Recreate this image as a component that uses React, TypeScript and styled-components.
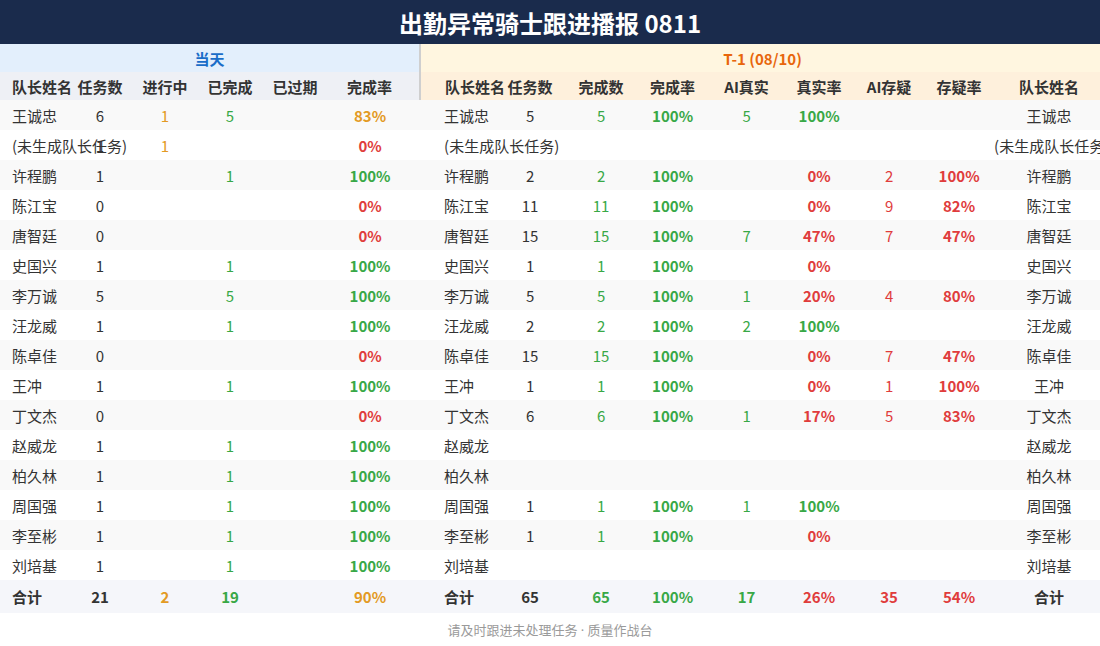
import * as React from 'react';
import styled, { createGlobalStyle } from 'styled-components';

type Tone = 'dark' | 'orange' | 'green' | 'red';

interface TodayRow {
  name: string;
  tasks?: number;
  doing?: number;
  done?: number;
  expired?: number;
  rate: number;
}

interface PrevRow {
  name: string;
  tasks?: number;
  done?: number;
  rate?: number;
  aiTrue?: number;
  trueRate?: number;
  aiDoubt?: number;
  doubtRate?: number;
}

const today: TodayRow[] = [
  { name: '王诚忠', tasks: 6, doing: 1, done: 5, rate: 83 },
  { name: '(未生成队长任务)', tasks: 1, doing: 1, rate: 0 },
  { name: '许程鹏', tasks: 1, done: 1, rate: 100 },
  { name: '陈江宝', tasks: 0, rate: 0 },
  { name: '唐智廷', tasks: 0, rate: 0 },
  { name: '史国兴', tasks: 1, done: 1, rate: 100 },
  { name: '李万诚', tasks: 5, done: 5, rate: 100 },
  { name: '汪龙威', tasks: 1, done: 1, rate: 100 },
  { name: '陈卓佳', tasks: 0, rate: 0 },
  { name: '王冲', tasks: 1, done: 1, rate: 100 },
  { name: '丁文杰', tasks: 0, rate: 0 },
  { name: '赵威龙', tasks: 1, done: 1, rate: 100 },
  { name: '柏久林', tasks: 1, done: 1, rate: 100 },
  { name: '周国强', tasks: 1, done: 1, rate: 100 },
  { name: '李至彬', tasks: 1, done: 1, rate: 100 },
  { name: '刘培基', tasks: 1, done: 1, rate: 100 },
];

const prev: PrevRow[] = [
  { name: '王诚忠', tasks: 5, done: 5, rate: 100, aiTrue: 5, trueRate: 100 },
  { name: '(未生成队长任务)' },
  { name: '许程鹏', tasks: 2, done: 2, rate: 100, trueRate: 0, aiDoubt: 2, doubtRate: 100 },
  { name: '陈江宝', tasks: 11, done: 11, rate: 100, trueRate: 0, aiDoubt: 9, doubtRate: 82 },
  { name: '唐智廷', tasks: 15, done: 15, rate: 100, aiTrue: 7, trueRate: 47, aiDoubt: 7, doubtRate: 47 },
  { name: '史国兴', tasks: 1, done: 1, rate: 100, trueRate: 0 },
  { name: '李万诚', tasks: 5, done: 5, rate: 100, aiTrue: 1, trueRate: 20, aiDoubt: 4, doubtRate: 80 },
  { name: '汪龙威', tasks: 2, done: 2, rate: 100, aiTrue: 2, trueRate: 100 },
  { name: '陈卓佳', tasks: 15, done: 15, rate: 100, trueRate: 0, aiDoubt: 7, doubtRate: 47 },
  { name: '王冲', tasks: 1, done: 1, rate: 100, trueRate: 0, aiDoubt: 1, doubtRate: 100 },
  { name: '丁文杰', tasks: 6, done: 6, rate: 100, aiTrue: 1, trueRate: 17, aiDoubt: 5, doubtRate: 83 },
  { name: '赵威龙' },
  { name: '柏久林' },
  { name: '周国强', tasks: 1, done: 1, rate: 100, aiTrue: 1, trueRate: 100 },
  { name: '李至彬', tasks: 1, done: 1, rate: 100, trueRate: 0 },
  { name: '刘培基' },
];

const completionTone = (rate: number): Tone => {
  if (rate >= 100) return 'green';
  if (rate >= 60) return 'orange';
  return 'red';
};

const trueTone = (rate: number): Tone => (rate >= 100 ? 'green' : 'red');

const colors: Record<Tone, string> = {
  dark: '#333333',
  orange: '#e39a23',
  green: '#38a846',
  red: '#e03c3c',
};

const GlobalStyle = createGlobalStyle`
  html, body {
    margin: 0;
    padding: 0;
    background: #ffffff;
    overflow: hidden;
  }
  body {
    font-family: "Noto Sans CJK SC", "Noto Sans", sans-serif;
    color: #333333;
  }
`;

const Page = styled.div`
  width: 1100px;
  height: 646px;
  overflow: hidden;
  display: flex;
  flex-direction: column;
`;

const TitleBar = styled.header`
  height: 44px;
  flex: none;
  background: #1a2b4c;
  color: #ffffff;
  display: flex;
  align-items: center;
  justify-content: center;
  font-size: 24px;
  font-weight: 700;
`;

const Table = styled.table`
  width: 1104px;
  table-layout: fixed;
  border-collapse: collapse;
  font-size: 15px;
  flex: none;
`;

const SectionCell = styled.th<{ $side: 'today' | 'prev' }>`
  height: 28px;
  padding: 0;
  font-size: 15px;
  font-weight: 700;
  text-align: center;
  background: ${(p) => (p.$side === 'today' ? '#e3effc' : '#fff6e0')};
  color: ${(p) => (p.$side === 'today' ? '#1a6dc8' : '#e8660c')};
  border-right: ${(p) => (p.$side === 'today' ? '2px solid #cfcfcf' : 'none')};
`;

const HeadCell = styled.th<{ $side: 'today' | 'prev'; $align?: 'left' | 'center'; $divider?: boolean; $pl?: number; $pr?: number }>`
  height: 28px;
  padding: 0 ${(p) => p.$pr ?? 0}px 0 ${(p) => p.$pl ?? 0}px;
  font-size: 15px;
  font-weight: 700;
  color: #333333;
  white-space: nowrap;
  text-align: ${(p) => p.$align ?? 'center'};
  background: ${(p) => (p.$side === 'today' ? '#eef0f5' : '#fef0dc')};
  border-right: ${(p) => (p.$divider ? '2px solid #cfcfcf' : 'none')};
`;

const Row = styled.tr<{ $striped: boolean }>`
  background: ${(p) => (p.$striped ? '#f9f9f9' : '#ffffff')};
`;

const TotalRow = styled.tr`
  background: #f5f6fa;
`;

const Cell = styled.td<{ $tone?: Tone; $bold?: boolean; $align?: 'left' | 'center'; $pl?: number; $pr?: number; $total?: boolean }>`
  height: ${(p) => (p.$total ? 33 : 30)}px;
  padding: 0 ${(p) => p.$pr ?? 0}px 0 ${(p) => p.$pl ?? 0}px;
  white-space: nowrap;
  overflow: visible;
  text-align: ${(p) => p.$align ?? 'center'};
  color: ${(p) => colors[p.$tone ?? 'dark']};
  font-weight: ${(p) => (p.$bold || p.$total ? 700 : 400)};
`;

const Footer = styled.footer`
  flex: 1;
  display: flex;
  justify-content: center;
  padding-top: 7px;
  font-family: "Noto Sans", "Noto Sans CJK SC", sans-serif;
  font-size: 13px;
  color: #9a9a9a;
`;

const show = (v?: number) => (v === undefined ? '' : v);
const pct = (v?: number) => (v === undefined ? '' : `${v}%`);

export default function App() {
  return (
    <Page>
      <GlobalStyle />
      <TitleBar>出勤异常骑士跟进播报 0811</TitleBar>
      <Table>
        <colgroup>
          <col style={{ width: 70 }} />
          <col style={{ width: 60 }} />
          <col style={{ width: 70 }} />
          <col style={{ width: 60 }} />
          <col style={{ width: 70 }} />
          <col style={{ width: 90 }} />
          <col style={{ width: 74 }} />
          <col style={{ width: 72 }} />
          <col style={{ width: 70 }} />
          <col style={{ width: 73 }} />
          <col style={{ width: 75 }} />
          <col style={{ width: 70 }} />
          <col style={{ width: 70 }} />
          <col style={{ width: 70 }} />
          <col style={{ width: 110 }} />
        </colgroup>
        <thead>
          <tr>
            <SectionCell $side="today" colSpan={6}>
              当天
            </SectionCell>
            <SectionCell $side="prev" colSpan={9}>
              T-1 (08/10)
            </SectionCell>
          </tr>
          <tr>
            <HeadCell $side="today" $align="left" $pl={12}>
              队长姓名
            </HeadCell>
            <HeadCell $side="today">任务数</HeadCell>
            <HeadCell $side="today">进行中</HeadCell>
            <HeadCell $side="today">已完成</HeadCell>
            <HeadCell $side="today">已过期</HeadCell>
            <HeadCell $side="today" $pr={10} $divider>
              完成率
            </HeadCell>
            <HeadCell $side="prev" $align="left" $pl={24}>
              队长姓名
            </HeadCell>
            <HeadCell $side="prev">任务数</HeadCell>
            <HeadCell $side="prev">完成数</HeadCell>
            <HeadCell $side="prev">完成率</HeadCell>
            <HeadCell $side="prev">AI真实</HeadCell>
            <HeadCell $side="prev">真实率</HeadCell>
            <HeadCell $side="prev">AI存疑</HeadCell>
            <HeadCell $side="prev">存疑率</HeadCell>
            <HeadCell $side="prev">队长姓名</HeadCell>
          </tr>
        </thead>
        <tbody>
          {today.map((t, i) => {
            const p = prev[i];
            return (
              <Row key={`row-${i}`} $striped={i % 2 === 0}>
                <Cell $align="left" $pl={12}>
                  {t.name}
                </Cell>
                <Cell>{show(t.tasks)}</Cell>
                <Cell $tone="orange">{show(t.doing)}</Cell>
                <Cell $tone="green">{show(t.done)}</Cell>
                <Cell $tone="red">{show(t.expired)}</Cell>
                <Cell $tone={completionTone(t.rate)} $bold $pr={10}>
                  {pct(t.rate)}
                </Cell>
                <Cell $align="left" $pl={24}>
                  {p.name}
                </Cell>
                <Cell>{show(p.tasks)}</Cell>
                <Cell $tone="green">{show(p.done)}</Cell>
                <Cell $tone={p.rate !== undefined ? completionTone(p.rate) : 'dark'} $bold>
                  {pct(p.rate)}
                </Cell>
                <Cell $tone="green">{show(p.aiTrue)}</Cell>
                <Cell $tone={p.trueRate !== undefined ? trueTone(p.trueRate) : 'dark'} $bold>
                  {pct(p.trueRate)}
                </Cell>
                <Cell $tone="red">{show(p.aiDoubt)}</Cell>
                <Cell $tone="red" $bold>
                  {pct(p.doubtRate)}
                </Cell>
                <Cell>{p.name}</Cell>
              </Row>
            );
          })}
          <TotalRow>
            <Cell $total $align="left" $pl={12}>
              合计
            </Cell>
            <Cell $total>21</Cell>
            <Cell $total $tone="orange">2</Cell>
            <Cell $total $tone="green">19</Cell>
            <Cell $total />
            <Cell $total $tone="orange" $pr={10}>
              90%
            </Cell>
            <Cell $total $align="left" $pl={24}>
              合计
            </Cell>
            <Cell $total>65</Cell>
            <Cell $total $tone="green">65</Cell>
            <Cell $total $tone="green">100%</Cell>
            <Cell $total $tone="green">17</Cell>
            <Cell $total $tone="red">26%</Cell>
            <Cell $total $tone="red">35</Cell>
            <Cell $total $tone="red">54%</Cell>
            <Cell $total>合计</Cell>
          </TotalRow>
        </tbody>
      </Table>
      <Footer>请及时跟进未处理任务 · 质量作战台</Footer>
    </Page>
  );
}
